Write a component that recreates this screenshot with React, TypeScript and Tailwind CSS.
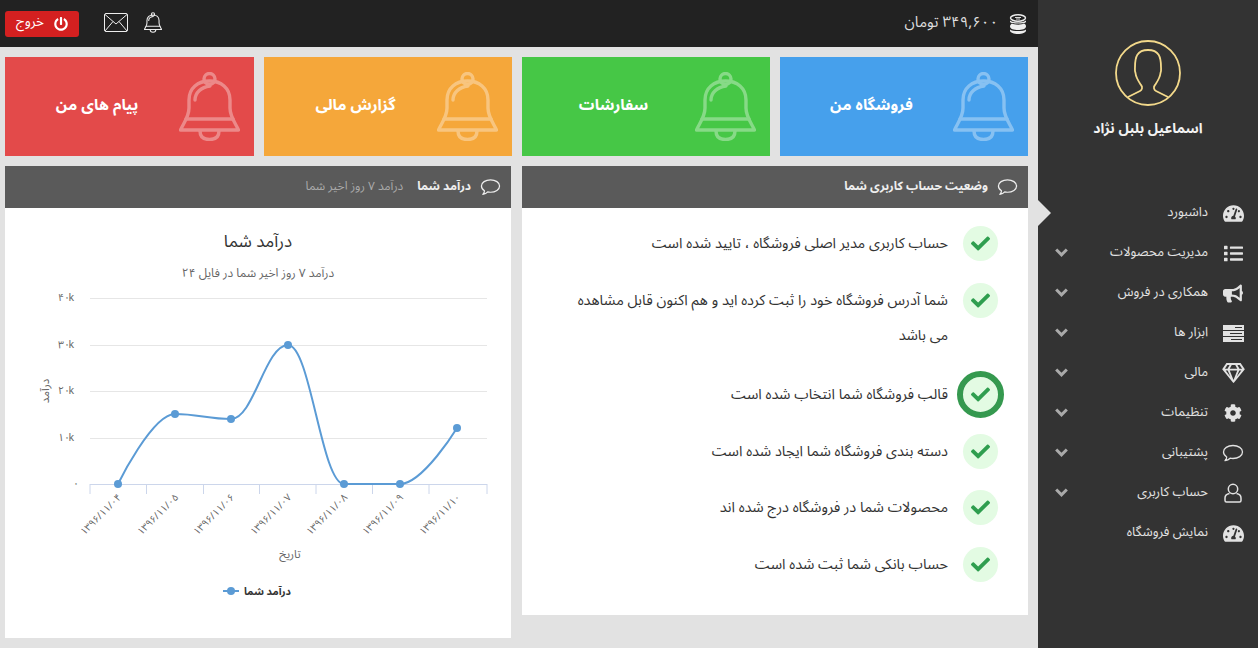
import React from "react";
import { FaTachometerAlt, FaList, FaBullhorn, FaRegGem, FaCog, FaCheck, FaPowerOff } from "react-icons/fa";

const font = { fontFamily: '"Noto Sans Arabic","DejaVu Sans",sans-serif' };

function Bell({ className, sw = 3.4 }: { className?: string; sw?: number }) {
  return (
    <svg viewBox="0 0 61 69" className={className} fill="none" stroke="currentColor" strokeWidth={sw} strokeLinecap="round" strokeLinejoin="round">
      <circle cx="30.500" cy="7" r="5.500" />
      <path d="M10 36V28C10 16 19 9 30.500 9S51 16 51 28V36C51 45 57 52 59.500 58H1.500C4 52 10 45 10 36Z" />
      <path d="M7 47H54" />
      <path d="M16 28C16 21 22 15 31 14" />
      <path d="M21 59C21 65 25 67.500 30.500 67.500S40 65 40 59" />
    </svg>
  );
}

function Bubble({ className }: { className?: string }) {
  return (
    <svg viewBox="0 0 22 18" className={className} fill="none" stroke="currentColor" strokeWidth="1.300" strokeLinejoin="round">
      <path d="M11 1.500c5.300 0 9.500 2.800 9.500 6.500s-4.200 6.500-9.500 6.500c-1 0-2-.1-2.900-.3C6.800 15.700 5 16.500 3 16.700c1-1 1.700-2.200 1.700-3.700C2.800 11.800 1.500 10 1.500 8c0-3.700 4.200-6.500 9.500-6.500Z" />
    </svg>
  );
}

function UserLine({ className }: { className?: string }) {
  return (
    <svg viewBox="0 0 18 20" className={className} fill="none" stroke="currentColor" strokeWidth="1.500">
      <circle cx="9" cy="6" r="4.700" />
      <path d="M5.500 10.500C3 11 1 12.500 1 15v2.500c0 .8.700 1.500 1.500 1.500h13c.8 0 1.500-.7 1.500-1.500V15c0-2.500-2-4-4.500-4.500" />
    </svg>
  );
}

function Stack({ className }: { className?: string }) {
  return (
    <svg viewBox="0 0 21 17" className={className}>
      <rect width="21" height="5" y="0" fill="currentColor" />
      <rect width="21" height="5" y="6" fill="currentColor" />
      <rect width="21" height="5" y="12" fill="currentColor" />
      <path d="M12 2.500H19M7 8.500H19M8 14.500H19" stroke="#333" strokeWidth="1" />
    </svg>
  );
}

function Chevron({ className }: { className?: string }) {
  return (
    <svg viewBox="0 0 13 9" className={className} fill="none" stroke="currentColor" strokeWidth="3">
      <path d="M1.200 1.500L6.500 6.800L11.800 1.500" />
    </svg>
  );
}

function Coins({ className }: { className?: string }) {
  return (
    <svg viewBox="0 0 18 20" className={className}>
      <path d="M1 12.500C1 11 2 10 3 9.500C5 11 13 11 15 9.500C16.500 10 17 11 17 12.500C17 15 13 16 9 16S1 15 1 12.500Z" fill="currentColor" />
      <path d="M1 15.500C3 17.500 15 17.500 17 15.500V16.500C17 18.800 13 20 9 20S1 18.800 1 16.500Z" fill="currentColor" />
      <path d="M1 6.500C3 9 15 9 17 6.500V8C16 10 2 10 1 8Z" fill="currentColor" />
      <ellipse cx="9" cy="4" rx="7.500" ry="3.200" fill="none" stroke="currentColor" strokeWidth="1.400" />
      <path d="M6 3.500H12M7 5H11" stroke="currentColor" strokeWidth=".9" />
    </svg>
  );
}

const menu: [string, React.ReactNode, boolean][] = [
  ["داشبورد", <FaTachometerAlt className="w-[21px] h-[19px]" />, false],
  ["مدیریت محصولات", <FaList className="w-[21px] h-[19px]" />, true],
  ["همکاری در فروش", <FaBullhorn className="w-[20px] h-[19px]" />, true],
  ["ابزار ها", <Stack className="w-[21px] h-[17px]" />, true],
  ["مالی", <FaRegGem className="w-[23px] h-[20px]" />, true],
  ["تنظیمات", <FaCog className="w-[18px] h-[18px]" />, true],
  ["پشتیبانی", <Bubble className="w-[22px] h-[18px]" />, true],
  ["حساب کاربری", <UserLine className="w-[18px] h-[20px]" />, true],
  ["نمایش فروشگاه", <FaTachometerAlt className="w-[21px] h-[19px]" />, false],
];

const cards: [string, string][] = [
  ["فروشگاه من", "bg-[#46a0ec]"],
  ["سفارشات", "bg-[#46c746]"],
  ["گزارش مالی", "bg-[#f5a73a]"],
  ["پیام های من", "bg-[#e34a4a]"],
];

const checks: [string, boolean?][] = [
  ["حساب کاربری مدیر اصلی فروشگاه ، تایید شده است"],
  ["شما آدرس فروشگاه خود را ثبت کرده اید و هم اکنون قابل مشاهده می باشد"],
  ["قالب فروشگاه شما انتخاب شده است", true],
  ["دسته بندی فروشگاه شما ایجاد شده است"],
  ["محصولات شما در فروشگاه درج شده اند"],
  ["حساب بانکی شما ثبت شده است"],
];

const pts = [[118, 484], [175, 414], [231, 419], [288, 345], [344, 484], [400, 484], [457, 428]];

function splinePath(p: number[][]) {
  const s = 1.5, d = s + 1;
  const ctrl = p.map((c, i) => {
    if (i === 0 || i === p.length - 1) return { lx: c[0], ly: c[1], rx: c[0], ry: c[1] };
    const [x, y] = c, [ax, ay] = p[i - 1], [bx, by] = p[i + 1];
    const lx = (s * x + ax) / d, rx = (s * x + bx) / d;
    let ly = (s * y + ay) / d, ry = (s * y + by) / d;
    const corr = ((ry - ly) * (rx - x)) / (rx - lx) + y - ry;
    ly += corr; ry += corr;
    if (ly > ay && ly > y) { ly = Math.max(ay, y); ry = 2 * y - ly; }
    else if (ly < ay && ly < y) { ly = Math.min(ay, y); ry = 2 * y - ly; }
    if (ry > by && ry > y) { ry = Math.max(by, y); ly = 2 * y - ry; }
    else if (ry < by && ry < y) { ry = Math.min(by, y); ly = 2 * y - ry; }
    return { lx, ly, rx, ry };
  });
  let out = `M${p[0][0]} ${p[0][1]}`;
  for (let i = 1; i < p.length; i++) {
    out += `C${ctrl[i - 1].rx} ${ctrl[i - 1].ry} ${ctrl[i].lx} ${ctrl[i].ly} ${p[i][0]} ${p[i][1]}`;
  }
  return out;
}

const dates = ["۱۳۹۶/۱۱/۰۴", "۱۳۹۶/۱۱/۰۵", "۱۳۹۶/۱۱/۰۶", "۱۳۹۶/۱۱/۰۷", "۱۳۹۶/۱۱/۰۸", "۱۳۹۶/۱۱/۰۹", "۱۳۹۶/۱۱/۱۰"];

function Chart() {
  const ticks = [90, 146.5, 203.5, 259.5, 316, 372.5, 429, 487];
  return (
    <svg viewBox="5 208 506 430" className="w-[506px] h-[430px] block">
      <text x="258" y="247" textAnchor="middle" fontSize="17" fill="#333">درآمد شما</text>
      <text x="258" y="277" textAnchor="middle" fontSize="12" fill="#666">درآمد ۷ روز اخیر شما در فایل ۲۴</text>
      {[298, 345, 391, 438].map((y) => (
        <line key={y} x1="90" x2="487" y1={y + 0.5} y2={y + 0.5} stroke="#e6e6e6" />
      ))}
      <line x1="90" x2="487" y1="484.500" y2="484.500" stroke="#ccd6eb" />
      {ticks.map((x) => (
        <line key={x} x1={x} x2={x} y1="484" y2="494" stroke="#ccd6eb" />
      ))}
      {[["۴۰", 298], ["۳۰", 345], ["۲۰", 391], ["۱۰", 438]].map(([t, y]) => (
        <g key={t as string}>
          <text x="70" y={(y as number) + 3} fontSize="10.500" fill="#666" direction="ltr" textAnchor="end">{t}</text>
          <text x="68.500" y={(y as number) + 3} fontSize="10.500" fill="#666" direction="ltr" textAnchor="start">k</text>
        </g>
      ))}
      <text x="73" y="487" fontSize="10.500" fill="#666" direction="ltr" textAnchor="start">۰</text>
      <text transform="translate(49 391) rotate(-90)" textAnchor="middle" fontSize="11.500" fill="#666">درآمد</text>
      {dates.map((t, i) => (
        <text key={t} transform={`translate(${pts[i][0] + 4} 498) rotate(-45)`} textAnchor="end" fontSize="10" fill="#666" direction="ltr">{t}</text>
      ))}
      <text x="290" y="558" textAnchor="middle" fontSize="11.500" fill="#666">تاریخ</text>
      <path d={splinePath(pts)} fill="none" stroke="#5b9bd5" strokeWidth="2" />
      {pts.map(([x, y]) => (
        <circle key={x} cx={x} cy={y} r="4" fill="#5b9bd5" />
      ))}
      <line x1="223" x2="239" y1="591" y2="591" stroke="#5b9bd5" strokeWidth="2" />
      <circle cx="231" cy="591" r="4" fill="#5b9bd5" />
      <text x="291" y="595" textAnchor="start" fontSize="10.500" fontWeight="700" fill="#333">درآمد شما</text>
    </svg>
  );
}

function PanelHead({ title, sub }: { title: string; sub?: string }) {
  return (
    <div className="h-[42px] bg-[#5a5a5a] flex items-center pr-[10px] text-white">
      <Bubble className="w-[21px] h-[18px] ml-[9px] text-[#eee]" />
      <span className="text-[12px] font-bold text-[#eee]">{title}</span>
      {sub && <span className="text-[12px] text-[#aaa] mr-[14px]">{sub}</span>}
    </div>
  );
}

export default function App() {
  return (
    <div dir="rtl" style={font} className="w-[1258px] h-[648px] overflow-hidden flex bg-[#e2e2e2]">
      <aside className="w-[220px] h-full bg-[#333] shrink-0 relative">
        <div className="absolute left-0 top-[200px] w-0 h-0 border-y-[13px] border-y-transparent border-l-[13px] border-l-[#e2e2e2]" />
        <div className="h-[193px] flex flex-col items-center pt-[40px]">
          <svg viewBox="0 0 66 66" className="w-[66px] h-[66px] text-[#f3d98b]" fill="none" stroke="currentColor" strokeWidth="1.800">
            <circle cx="33" cy="33" r="32" />
            <path d="M13 57L25 51C27 50 28 47 26 45C24 42 21 38 20.500 33C19.500 31 20 29 20 27C20 17 22 10 33 10C44 10 46 17 46 27C46 29 46.500 31 45.500 33C45 38 42 42 40 45C38 47 39 50 41 51L53 57" />
          </svg>
          <div className="mt-[12px] text-[14px] font-bold text-[#f2f2f2]">اسماعیل بلبل نژاد</div>
        </div>
        <nav>
          {menu.map(([label, icon, more]) => (
            <div key={label} className="h-[40px] flex items-center text-[#e2e2e2]">
              <div className="w-[50px] flex justify-center shrink-0">{icon}</div>
              <span className="text-[13px] flex-1">{label}</span>
              {more && <Chevron className="w-[13px] h-[9px] ml-[17px] mb-[2px] text-[#aaa]" />}
            </div>
          ))}
        </nav>
      </aside>

      <main className="flex-1 min-w-0 flex flex-col">
        <header className="h-[47px] bg-[#222] flex items-center justify-between pr-[11px] pl-[5px] text-[#ddd]">
          <div className="flex items-center gap-[11px]">
            <Coins className="w-[18px] h-[20px] text-[#eee]" />
            <span className="text-[15px] mb-[2px]">۳۴۹,۶۰۰ تومان</span>
          </div>
          <div className="flex items-center">
            <Bell sw={3.6} className="w-[18px] h-[21px] text-[#eee] mb-[3px]" />
            <svg viewBox="0 0 24 19" className="w-[24px] h-[19px] mr-[16px] text-[#eee] mb-[3px]" fill="none" stroke="currentColor" strokeWidth="1">
              <rect x="0.500" y="0.500" width="23" height="18" rx="1.500" />
              <path d="M1 1.500L12 11L23 1.500M1 18L9 8.500M23 18L15 8.500" />
            </svg>
            <div className="w-[74px] h-[26px] mr-[25px] rounded-[3px] bg-[#d42020] text-white flex items-center justify-center gap-[10px]">
              <FaPowerOff className="w-[14px] h-[14px]" />
              <span className="text-[13.5px] mb-[2px]">خروج</span>
            </div>
          </div>
        </header>

        <div className="flex-1 pr-[10px] pl-[5px] pt-[10px]">
          <div className="grid grid-cols-[248px_248px_248px_249px] gap-[10px]">
            {cards.map(([t, c]) => (
              <div key={t} className={`${c} h-[99px] flex items-center text-white pr-[14px]`}>
                <Bell className="w-[61px] h-[69px] opacity-35 shrink-0" />
                <span className="flex-1 text-center text-[15.5px] font-bold pl-[10px] mb-[2px]">{t}</span>
              </div>
            ))}
          </div>
          <div className="grid grid-cols-2 gap-[11px] mt-[10px] items-start">
            <section className="bg-white">
              <PanelHead title="وضعیت حساب کاربری شما" />
              <div className="h-[407px] pr-[30px] pl-[35px] pt-[18px] flex flex-col">
                {checks.map(([t, big], i) => (
                  <div key={i} className={`flex ${i === 1 ? "h-[84px]" : "h-[56.5px]"} ${i > 1 ? "items-center" : "items-start"}`}>
                    <div className={`w-[35px] h-[35px] rounded-full bg-[#e3fbe3] flex items-center justify-center shrink-0 text-[#2f9e4f] ${big ? "outline-[6px] outline-[#35994f]" : ""}`}>
                      <FaCheck className="w-[19px] h-[19px]" />
                    </div>
                    <p className="mr-[15px] text-[14.5px] leading-[35px] text-[#333]">{t}</p>
                  </div>
                ))}
              </div>
            </section>
            <section className="bg-white">
              <PanelHead title="درآمد شما" sub="درآمد ۷ روز اخیر شما" />
              <Chart />
            </section>
          </div>
        </div>
      </main>
    </div>
  );
}
